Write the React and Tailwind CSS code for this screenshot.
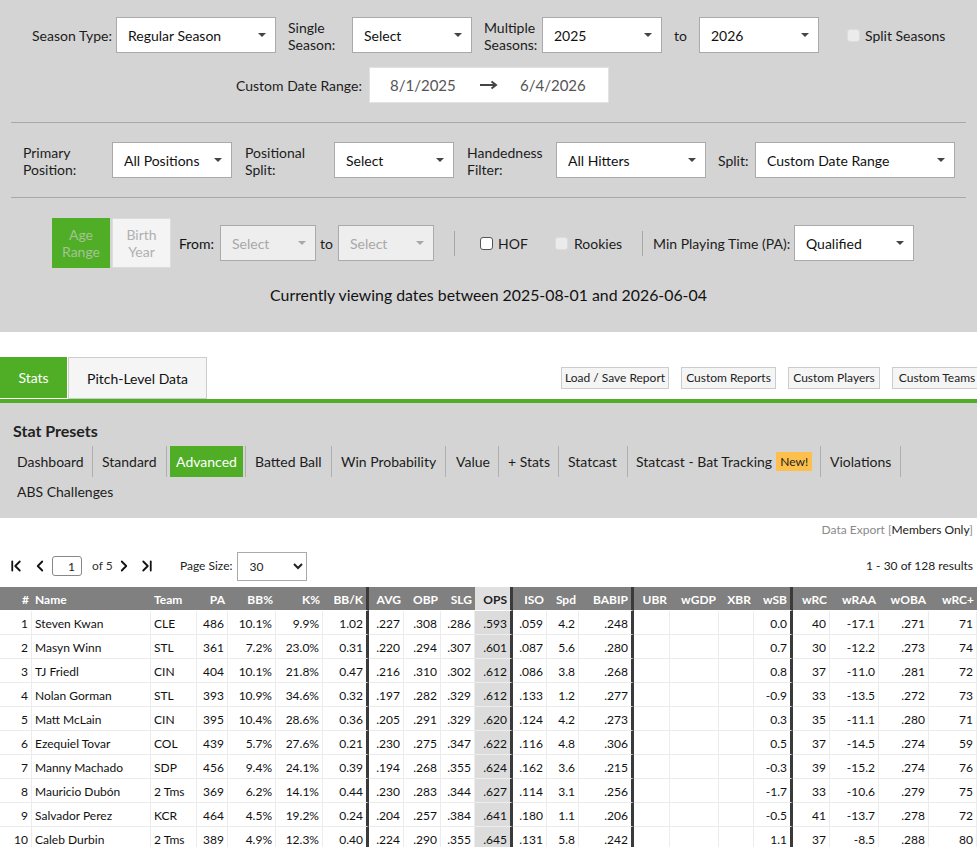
import { ChevronFirst, ChevronLast, ChevronLeft, ChevronRight } from "lucide-react";

const columns = [
  { name: "#", width: "w-[32px]", align: "text-right" },
  { name: "Name", width: "w-[119px]", align: "text-left" },
  { name: "Team", width: "w-[46px]", align: "text-left" },
  { name: "PA", width: "w-[31px]" },
  { name: "BB%", width: "w-[48px]" },
  { name: "K%", width: "w-[47px]" },
  { name: "BB/K", width: "w-[46px]", thick: true },
  { name: "AVG", width: "w-[35px]" },
  { name: "OBP", width: "w-[37px]" },
  { name: "SLG", width: "w-[34px]" },
  { name: "OPS", width: "w-[38px]", thick: true, sorted: true },
  { name: "ISO", width: "w-[34px]" },
  { name: "Spd", width: "w-[32px]" },
  { name: "BABIP", width: "w-[55px]", thick: true },
  { name: "UBR", width: "w-[36px]" },
  { name: "wGDP", width: "w-[49px]" },
  { name: "XBR", width: "w-[35px]" },
  { name: "wSB", width: "w-[39px]", thick: true },
  { name: "wRC", width: "w-[37px]" },
  { name: "wRAA", width: "w-[49px]" },
  { name: "wOBA", width: "w-[50px]" },
  { name: "wRC+", width: "w-[48px]" },
];

const players = [
  [1, "Steven Kwan", "CLE", 486, "10.1%", "9.9%", "1.02", ".227", ".308", ".286", ".593", ".059", "4.2", ".248", "", "", "", "0.0", 40, "-17.1", ".271", 71],
  [2, "Masyn Winn", "STL", 361, "7.2%", "23.0%", "0.31", ".220", ".294", ".307", ".601", ".087", "5.6", ".280", "", "", "", "0.7", 30, "-12.2", ".273", 74],
  [3, "TJ Friedl", "CIN", 404, "10.1%", "21.8%", "0.47", ".216", ".310", ".302", ".612", ".086", "3.8", ".268", "", "", "", "0.8", 37, "-11.0", ".281", 72],
  [4, "Nolan Gorman", "STL", 393, "10.9%", "34.6%", "0.32", ".197", ".282", ".329", ".612", ".133", "1.2", ".277", "", "", "", "-0.9", 33, "-13.5", ".272", 73],
  [5, "Matt McLain", "CIN", 395, "10.4%", "28.6%", "0.36", ".205", ".291", ".329", ".620", ".124", "4.2", ".273", "", "", "", "0.3", 35, "-11.1", ".280", 71],
  [6, "Ezequiel Tovar", "COL", 439, "5.7%", "27.6%", "0.21", ".230", ".275", ".347", ".622", ".116", "4.8", ".306", "", "", "", "0.5", 37, "-14.5", ".274", 59],
  [7, "Manny Machado", "SDP", 456, "9.4%", "24.1%", "0.39", ".194", ".268", ".355", ".624", ".162", "3.6", ".215", "", "", "", "-0.3", 39, "-15.2", ".274", 76],
  [8, "Mauricio Dubón", "2 Tms", 369, "6.2%", "14.1%", "0.44", ".230", ".283", ".344", ".627", ".114", "3.1", ".256", "", "", "", "-1.7", 33, "-10.6", ".279", 75],
  [9, "Salvador Perez", "KCR", 464, "4.5%", "19.2%", "0.24", ".204", ".257", ".384", ".641", ".180", "1.1", ".206", "", "", "", "-0.5", 41, "-13.7", ".278", 72],
  [10, "Caleb Durbin", "2 Tms", 389, "4.9%", "12.3%", "0.40", ".224", ".290", ".355", ".645", ".131", "5.8", ".242", "", "", "", "1.1", 37, "-8.5", ".288", 80],
];

const presets = [
  { name: "Dashboard", width: "w-[80px]", pad: "pl-[4px]" },
  { name: "Standard", width: "w-[74px]", pad: "pl-[9px]" },
  { name: "Advanced", width: "w-[79px]", pad: "pl-[3px]" },
  { name: "Batted Ball", width: "w-[86px]", pad: "pl-[9px]" },
  { name: "Win Probability", width: "w-[114px]", pad: "pl-[9px]" },
  { name: "Value", width: "w-[53px]", pad: "pl-[10px]" },
  { name: "+ Stats", width: "w-[60px]", pad: "pl-[9px]" },
  { name: "Statcast", width: "w-[69px]", pad: "pl-[9px]" },
];

function Caret({ light }) {
  return (
    <svg width="8" height="4" viewBox="0 0 8 4" className="absolute right-[9px] top-[15px]">
      <polygon points="0,0 8,0 4,4" fill={light ? "#a8a8a8" : "#444"} />
    </svg>
  );
}

/* kendo style dropdown */
function Select({ value, width, disabled }) {
  return (
    <div
      className={`relative h-[36px] shrink-0 border border-[#aaaaaa] pl-[11px] leading-[35px] ${width} ${
        disabled ? "bg-[#eeeeee] text-[#a8a8a8]" : "bg-white text-[#111]"
      }`}
    >
      {value}
      <Caret light={disabled} />
    </div>
  );
}

function Check({ disabled }) {
  return (
    <span
      className={`block h-[13px] w-[13px] shrink-0 rounded-[3px] border ${
        disabled ? "border-[#dcdcdc] bg-[#ebebeb]" : "border-[#555] bg-white"
      }`}
    />
  );
}

function SmallButton({ children, className }) {
  return (
    <button className={`h-[22px] shrink-0 whitespace-nowrap border border-[#cccccc] bg-[#f5f5f5] text-[12px] leading-[20px] text-[#222] ${className}`}>
      {children}
    </button>
  );
}

export default function App() {
  return (
    <div className="h-screen overflow-hidden bg-white font-['Lato',sans-serif] text-[14px] text-[#1c1c1c]">
      {/* FILTERS */}
      <section className="h-[332px] bg-[#d4d4d4] px-[11px] pt-[17px]">
        <div className="flex h-[36px] items-center pl-[21px]">
          <span className="w-[84px] shrink-0">Season Type:</span>
          <Select value="Regular Season" width="w-[160px]" />
          <span className="ml-[12px] w-[64px] shrink-0 pt-[1px] leading-[17px]">Single Season:</span>
          <Select value="Select" width="w-[120px]" />
          <span className="ml-[12px] w-[58px] shrink-0 pt-[1px] leading-[17px]">Multiple Seasons:</span>
          <Select value="2025" width="w-[120px]" />
          <span className="ml-[12px] w-[25px] shrink-0">to</span>
          <Select value="2026" width="w-[120px]" />
          <span className="ml-[28px]"><Check disabled /></span>
          <span className="ml-[5px] whitespace-nowrap">Split Seasons</span>
        </div>

        <div className="mt-[14px] flex h-[36px] items-center pl-[225px]">
          <span className="w-[133px] shrink-0 whitespace-nowrap">Custom Date Range:</span>
          <div className="flex h-[36px] w-[240px] items-center border border-[#e2e2e2] bg-white pl-[20px] text-[15px] text-[#555]">
            <span className="w-[90px]">8/1/2025</span>
            <svg width="18" height="10" viewBox="0 0 18 10">
              <path d="M0 5h15M11.5 1.5L16 5l-4.5 3.5" fill="none" stroke="#444" strokeWidth="2" />
            </svg>
            <span className="ml-[22px]">6/4/2026</span>
          </div>
        </div>

        <hr className="mt-[19px] border-0 border-t border-[#a8a8a8]" />

        <div className="mt-[19px] flex h-[36px] items-center pl-[12px]">
          <span className="w-[89px] shrink-0 pt-[1px] leading-[17px]">Primary Position:</span>
          <Select value="All Positions" width="w-[120px]" />
          <span className="ml-[13px] w-[89px] shrink-0 pt-[1px] leading-[17px]">Positional Split:</span>
          <Select value="Select" width="w-[120px]" />
          <span className="ml-[13px] w-[89px] shrink-0 pt-[1px] leading-[17px]">Handedness Filter:</span>
          <Select value="All Hitters" width="w-[150px]" />
          <span className="ml-[12px] w-[37px] shrink-0">Split:</span>
          <Select value="Custom Date Range" width="w-[200px]" />
        </div>

        <hr className="mt-[19px] border-0 border-t border-[#a8a8a8]" />

        <div className="mt-[20px] flex h-[50px] items-center pl-[41px]">
          <div className="flex h-[50px] w-[58px] shrink-0 items-center justify-center bg-[#50ae26] px-2 text-center leading-[17px] text-[#a3c495]">
            Age Range
          </div>
          <div className="ml-[2px] flex h-[50px] w-[59px] shrink-0 items-center justify-center border border-[#dcdcdc] bg-[#f4f4f4] px-2 text-center leading-[17px] text-[#b0b0b0]">
            Birth Year
          </div>
          <span className="ml-[8px] w-[41px] shrink-0 text-[#111]">From:</span>
          <Select value="Select" width="w-[96px]" disabled />
          <span className="ml-[4px] w-[18px] shrink-0">to</span>
          <Select value="Select" width="w-[96px]" disabled />
          <span className="ml-[20px] h-[25px] w-[1px] shrink-0 bg-[#a8a8a8]" />
          <span className="ml-[25px]"><Check /></span>
          <span className="ml-[5px] w-[29px] shrink-0">HOF</span>
          <span className="ml-[28px]"><Check disabled /></span>
          <span className="ml-[6px] w-[48px] shrink-0">Rookies</span>
          <span className="ml-[20px] h-[25px] w-[1px] shrink-0 bg-[#a8a8a8]" />
          <span className="ml-[10px] w-[141px] shrink-0 whitespace-nowrap">Min Playing Time (PA):</span>
          <Select value="Qualified" width="w-[120px]" />
        </div>

        <p className="mt-[17px] text-center text-[15.85px] leading-[20px] text-[#111]">
          Currently viewing dates between 2025-08-01 and 2026-06-04
        </p>
      </section>

      {/* TABS */}
      <div className="mt-[25px] flex h-[42px] items-start">
        <div className="flex h-[41px] w-[67px] shrink-0 items-center justify-center bg-[#50ae26] text-white">Stats</div>
        <div className="ml-[1px] flex h-[42px] w-[139px] shrink-0 items-center justify-center border border-[#cccccc] bg-[#f5f5f5] text-[#111]">
          Pitch-Level Data
        </div>
        <div className="ml-[354px] mt-[10px] flex shrink-0">
          <SmallButton className="w-[108px]">Load / Save Report</SmallButton>
          <SmallButton className="ml-[12px] w-[95px]">Custom Reports</SmallButton>
          <SmallButton className="ml-[12px] w-[92px]">Custom Players</SmallButton>
          <SmallButton className="ml-[12px] w-[90px]">Custom Teams</SmallButton>
        </div>
      </div>
      <div className="h-[4px] bg-[#50ae26]" />

      {/* PRESETS */}
      <section className="h-[115px] bg-[#d4d4d4] pl-[13px] pt-[18px]">
        <h3 className="text-[16px] font-bold leading-[20px] text-[#222]">Stat Presets</h3>
        <div className="mt-[5px] flex h-[31px] items-center">
          {presets.map((item) => (
            <div key={item.name} className={`flex h-[31px] shrink-0 items-center border-r border-[#b0b0b0] ${item.width} ${item.pad}`}>
              {item.name === "Advanced" ? (
                <span className="flex h-[31px] w-[73px] items-center justify-center bg-[#50ae26] text-white">{item.name}</span>
              ) : (
                <span className="whitespace-nowrap">{item.name}</span>
              )}
            </div>
          ))}
          <div className="flex h-[31px] w-[193px] shrink-0 items-center border-r border-[#b0b0b0] pl-[8px]">
            <span className="whitespace-nowrap">Statcast - Bat Tracking</span>
            <span className="ml-[4px] flex h-[19px] w-[36px] items-center justify-center bg-[#fdc04d] text-[12px] text-[#222]">New!</span>
          </div>
          <div className="flex h-[31px] w-[80px] shrink-0 items-center border-r border-[#b0b0b0] pl-[9px]">Violations</div>
        </div>
        <div className="mt-[-1px] pl-[4px] leading-[31px]">ABS Challenges</div>
      </section>

      {/* EXPORT + PAGER */}
      <div className="h-[24px] pr-[4px] text-right text-[12px] leading-[24px] text-[#8a8a8a]">
        Data Export [<span className="text-[#222]">Members Only</span>]
      </div>
      <div className="mt-[9px] flex h-[30px] items-center pl-[8px] text-[12px]">
        <ChevronFirst size={18} strokeWidth={2.4} className="ml-[-1px] text-[#111]" />
        <ChevronLeft size={18} strokeWidth={2.4} className="ml-[6px] text-[#111]" />
        <input
          readOnly
          value="1"
          className="ml-[3px] h-[20px] w-[30px] rounded-[3px] border border-[#888] pr-[6px] text-right text-[12px] outline-none"
        />
        <span className="ml-[10px] w-[21px] shrink-0 whitespace-nowrap text-[#333]">of 5</span>
        <ChevronRight size={18} strokeWidth={2.4} className="ml-[2px] text-[#111]" />
        <ChevronLast size={18} strokeWidth={2.4} className="ml-[5px] text-[#111]" />
        <span className="ml-[24px] text-[#222]">Page Size:</span>
        <select className="ml-[4px] h-[29px] w-[70px] border border-[#aaa] bg-white pl-[8px] text-[12px] text-[#222]">
          <option>30</option>
        </select>
        <span className="ml-auto pr-[4px] text-[#222]">1 - 30 of 128 results</span>
      </div>

      {/* TABLE */}
      <table className="mt-[6px] w-[977px] table-fixed border-separate border-spacing-0 text-[12px]">
        <colgroup>
          {columns.map((col) => (
            <col key={col.name} className={col.width} />
          ))}
        </colgroup>
        <thead>
          <tr>
            {columns.map((col) => (
              <th
                key={col.name}
                className={`h-[24px] overflow-hidden border-b border-b-white px-[3px] pt-[2px] font-bold whitespace-nowrap ${col.align || "text-right"} ${
                  col.sorted ? "bg-[#e0e0e0] text-[#222]" : "bg-[#808080] text-white"
                } ${col.thick ? "border-r-[3px] border-r-[#3a3a3a]" : ""}`}
              >
                {col.name}
              </th>
            ))}
          </tr>
        </thead>
        <tbody>
          {players.map((row) => (
            <tr key={row[0]}>
              {row.map((value, i) => (
                <td
                  key={columns[i].name}
                  className={`h-[24px] overflow-hidden border-b border-b-[#ececec] px-[3px] pt-[2px] whitespace-nowrap text-[#111] ${
                    columns[i].align || "text-right"
                  } ${columns[i].thick ? "border-r-[3px] border-r-[#3a3a3a]" : "border-r border-r-[#ececec]"} ${
                    columns[i].sorted ? "bg-[#dcdcdc]" : ""
                  }`}
                >
                  {value}
                </td>
              ))}
            </tr>
          ))}
        </tbody>
      </table>
    </div>
  );
}
